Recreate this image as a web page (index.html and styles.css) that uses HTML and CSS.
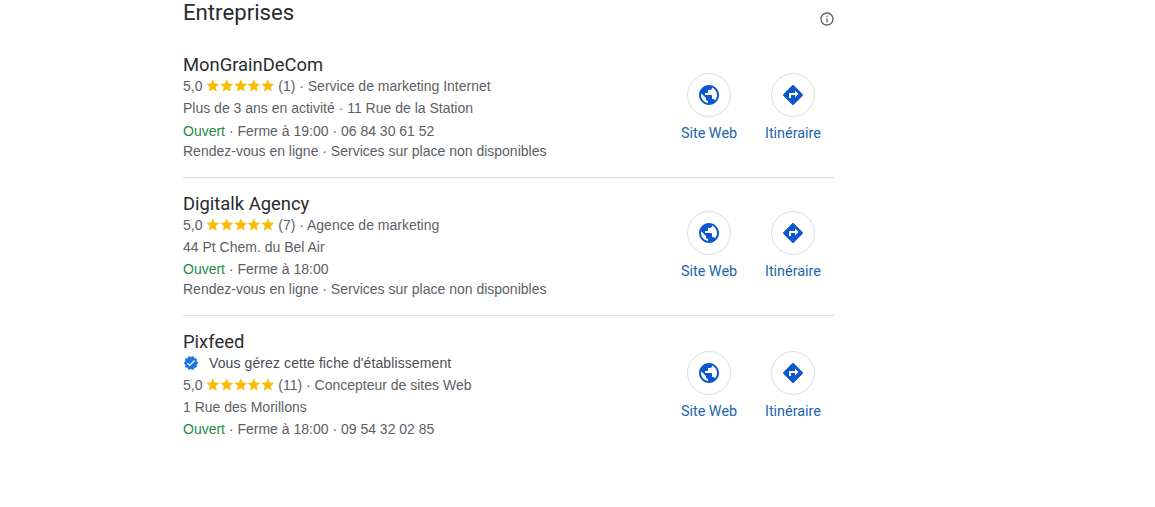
FILE: index.html
```html
<!DOCTYPE html>
<html lang="fr">

<head>
    <meta charset="UTF-8">
    <meta name="viewport" content="width=device-width, initial-scale=1.0">
    <title>Entreprises</title>
    <link rel="stylesheet" href="styles.css">
</head>

<body>
    <svg class="sprite" aria-hidden="true">
        <symbol id="star" viewBox="1.5 1.5 21 21"><path d="M12 17.27L18.18 21l-1.64-7.03L22 9.24l-7.19-.61L12 2 9.19 8.63 2 9.24l5.46 4.73L5.82 21z"/></symbol>
        <symbol id="globe" viewBox="0 0 24 24"><path d="M12 2C6.48 2 2 6.48 2 12s4.48 10 10 10 10-4.48 10-10S17.52 2 12 2zm-1 17.93c-3.95-.49-7-3.85-7-7.93 0-.62.08-1.21.21-1.79L9 15v1c0 1.1.9 2 2 2v1.93zm6.9-2.54c-.26-.81-1-1.39-1.9-1.39h-1v-3c0-.55-.45-1-1-1H8v-2h2c.55 0 1-.45 1-1V7h2c1.1 0 2-.9 2-2v-.41c2.93 1.19 5 4.06 5 7.41 0 2.08-.8 3.97-2.1 5.39z"/></symbol>
        <symbol id="route" viewBox="0 0 24 24"><path d="M21.71 11.29l-9-9c-.39-.39-1.02-.39-1.41 0l-9 9c-.39.39-.39 1.02 0 1.41l9 9c.39.39 1.02.39 1.41 0l9-9c.39-.38.39-1.01 0-1.41zM14 14.5V12h-4v3H8v-4c0-.55.45-1 1-1h5V7.5l3.5 3.5-3.5 3.5z"/></symbol>
        <symbol id="verified" viewBox="0 0 24 24"><path d="M23 12l-2.44-2.78.34-3.68-3.61-.82-1.89-3.18L12 3 8.6 1.54 6.71 4.72l-3.61.81.34 3.68L1 12l2.44 2.78-.34 3.69 3.61.82 1.89 3.18L12 21l3.4 1.46 1.89-3.18 3.61-.82-.34-3.68L23 12zm-13 5l-4-4 1.41-1.41L10 14.17l6.59-6.59L18 9l-8 8z"/></symbol>
        <symbol id="info" viewBox="0 0 24 24"><path d="M11 7h2v2h-2zm0 4h2v6h-2zm1-9C6.48 2 2 6.48 2 12s4.48 10 10 10 10-4.48 10-10S17.52 2 12 2zm0 18c-4.41 0-8-3.59-8-8s3.59-8 8-8 8 3.59 8 8-3.59 8-8 8z"/></symbol>
    </svg>

    <main class="panel">
        <header class="panel-head">
            <h2>Entreprises</h2>
            <svg class="info-icon"><use href="#info"/></svg>
        </header>

        <article class="business">
            <div class="details">
                <h3>MonGrainDeCom</h3>
                <div class="line">5,0 <span class="stars"><svg><use href="#star"/></svg><svg><use href="#star"/></svg><svg><use href="#star"/></svg><svg><use href="#star"/></svg><svg><use href="#star"/></svg></span> (1) · Service de marketing Internet</div>
                <div class="line line-tall">Plus de 3 ans en activité · 11 Rue de la Station</div>
                <div class="line"><span class="open">Ouvert</span> · Ferme à 19:00 · 06 84 30 61 52</div>
                <div class="line line-last">Rendez-vous en ligne · Services sur place non disponibles</div>
            </div>
            <div class="actions">
                <a class="action" href="#"><span class="circle"><svg><use href="#globe"/></svg></span>Site Web</a>
                <a class="action" href="#"><span class="circle"><svg><use href="#route"/></svg></span>Itinéraire</a>
            </div>
        </article>

        <article class="business">
            <div class="details">
                <h3>Digitalk Agency</h3>
                <div class="line">5,0 <span class="stars"><svg><use href="#star"/></svg><svg><use href="#star"/></svg><svg><use href="#star"/></svg><svg><use href="#star"/></svg><svg><use href="#star"/></svg></span> (7) · Agence de marketing</div>
                <div class="line">44 Pt Chem. du Bel Air</div>
                <div class="line"><span class="open">Ouvert</span> · Ferme à 18:00</div>
                <div class="line line-last">Rendez-vous en ligne · Services sur place non disponibles</div>
            </div>
            <div class="actions">
                <a class="action" href="#"><span class="circle"><svg><use href="#globe"/></svg></span>Site Web</a>
                <a class="action" href="#"><span class="circle"><svg><use href="#route"/></svg></span>Itinéraire</a>
            </div>
        </article>

        <article class="business">
            <div class="details">
                <h3>Pixfeed</h3>
                <div class="line owner"><svg class="verified"><use href="#verified"/></svg>Vous gérez cette fiche d'établissement</div>
                <div class="line">5,0 <span class="stars"><svg><use href="#star"/></svg><svg><use href="#star"/></svg><svg><use href="#star"/></svg><svg><use href="#star"/></svg><svg><use href="#star"/></svg></span> (11) · Concepteur de sites Web</div>
                <div class="line">1 Rue des Morillons</div>
                <div class="line"><span class="open">Ouvert</span> · Ferme à 18:00 · 09 54 32 02 85</div>
            </div>
            <div class="actions">
                <a class="action" href="#"><span class="circle"><svg><use href="#globe"/></svg></span>Site Web</a>
                <a class="action" href="#"><span class="circle"><svg><use href="#route"/></svg></span>Itinéraire</a>
            </div>
        </article>
    </main>
</body>

</html>
```

FILE: styles.css
```css
body {
    font-family: "Liberation Sans", Arial, sans-serif;
    margin: 0;
    background-color: #fff;
    color: #5c6065;
}

.sprite {
    display: none;
}

.panel {
    width: 652px;
    margin-left: 183px;
}

.panel-head {
    display: flex;
    justify-content: space-between;
    height: 39px;
}

h2 {
    margin: 0;
    font-family: Roboto, sans-serif;
    font-size: 22.2px;
    font-weight: 400;
    line-height: 25px;
    color: #2a2b2e;
}

.info-icon {
    width: 16px;
    height: 16px;
    margin: 11px 0 0;
    fill: #5f6368;
}

.business {
    display: flex;
    align-items: center;
    justify-content: space-between;
    padding: 16px 0;
    border-bottom: 1px solid #dadce0;
}

.business:last-child {
    border-bottom: none;
}

h3 {
    margin: 0;
    font-family: Roboto, sans-serif;
    font-size: 18.4px;
    font-weight: 400;
    line-height: 20px;
    color: #2a2b2e;
}

.line {
    font-size: 14px;
    line-height: 22px;
    white-space: nowrap;
}

.line-tall {
    line-height: 23px;
}

.line-last {
    line-height: 19px;
}

.stars {
    display: inline-flex;
    vertical-align: -2px;
}

.stars svg {
    width: 13.6px;
    height: 13.6px;
    fill: #fabb05;
}

.open {
    color: #258a42;
}

.owner {
    display: flex;
    align-items: center;
    letter-spacing: 0.1px;
    color: #4a4e53;
}

.verified {
    width: 16px;
    height: 16px;
    margin-right: 10px;
    fill: #1a73e8;
}

.actions {
    display: flex;
    gap: 4px;
    margin-right: 2px;
}

.action {
    display: flex;
    flex-direction: column;
    align-items: center;
    width: 80px;
    font-family: Roboto, sans-serif;
    font-size: 14.4px;
    line-height: 20px;
    color: #2065ad;
    text-decoration: none;
}

.circle {
    display: flex;
    align-items: center;
    justify-content: center;
    width: 42px;
    height: 42px;
    margin-bottom: 7px;
    border: 1px solid #dedede;
    border-radius: 50%;
}

.circle svg {
    width: 24px;
    height: 24px;
    fill: #0b57d0;
}
```
